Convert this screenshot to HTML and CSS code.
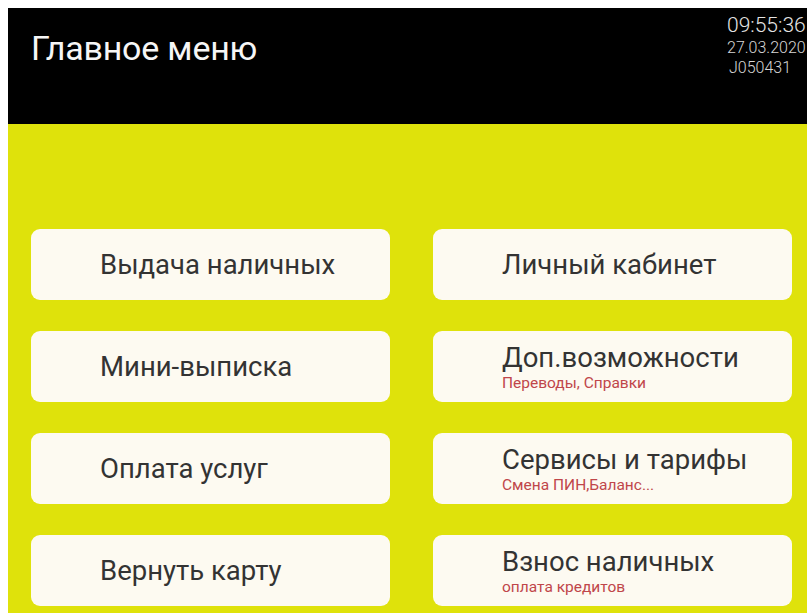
FILE: index.html
```html
<!DOCTYPE html>
<html lang="ru">
<head>
<meta charset="utf-8">
<title>Главное меню</title>
<link rel="stylesheet" href="styles.css">
</head>
<body>
<div class="screen">
  <header class="topbar">
    <h1 class="title">Главное меню</h1>
    <div class="status">
      <div class="clock">09:55:36</div>
      <div class="date">27.03.2020</div>
      <div class="terminal">J050431</div>
    </div>
  </header>
  <main class="menu">
    <div class="grid">
      <button class="item"><span class="label">Выдача наличных</span></button>
      <button class="item"><span class="label">Личный кабинет</span></button>
      <button class="item"><span class="label">Мини-выписка</span></button>
      <button class="item">
        <span class="label">Доп.возможности</span>
        <span class="hint">Переводы, Справки</span>
      </button>
      <button class="item"><span class="label">Оплата услуг</span></button>
      <button class="item">
        <span class="label">Сервисы и тарифы</span>
        <span class="hint">Смена ПИН,Баланс...</span>
      </button>
      <button class="item"><span class="label">Вернуть карту</span></button>
      <button class="item">
        <span class="label">Взнос наличных</span>
        <span class="hint">оплата кредитов</span>
      </button>
    </div>
  </main>
</div>
</body>
</html>
```

FILE: styles.css
```css
html {
  overflow: hidden;
}

body {
  margin: 8px 0 0 8px;
  background: #ffffff;
  font-family: Roboto, "Noto Sans", sans-serif;
}

.screen {
  width: 820px;
  height: 605px;
  overflow: hidden;
}

/* black title bar */
.topbar {
  display: flex;
  align-items: flex-start;
  height: 116px;
  background: #000000;
  color: #f6f6f6;
}

.title {
  flex: 1;
  margin: 0;
  padding: 22px 0 0 23px;
  font-size: 34px;
  font-weight: 400;
  line-height: 36px;
  letter-spacing: -0.2px;
}

.status {
  width: 101px;
  padding-top: 5px;
  color: #d6d6d6;
  font-weight: 300;
  white-space: nowrap;
}

.clock {
  font-size: 21px;
  line-height: 25px;
  color: #e4e4e4;
}

.date,
.terminal {
  font-size: 16px;
  line-height: 20px;
}

.terminal {
  padding-left: 2px;
}

/* yellow menu area */
.menu {
  background: #dfe20b;
  height: 489px;
  padding: 105px 0 0 23px;
  box-sizing: border-box;
}

.grid {
  display: grid;
  grid-template-columns: 359px 359px;
  grid-auto-rows: 71px;
  column-gap: 43px;
  row-gap: 31px;
}

.item {
  display: flex;
  flex-direction: column;
  justify-content: center;
  align-items: flex-start;
  padding: 0 0 0 69px;
  margin: 0;
  border: none;
  border-radius: 9px;
  background: #fdfaf1;
  font-family: inherit;
  text-align: left;
}

.label {
  font-size: 27.5px;
  line-height: 32px;
  color: #333333;
  white-space: nowrap;
}

.hint {
  font-size: 15.5px;
  line-height: 18px;
  color: #c0464a;
  white-space: nowrap;
}
```
